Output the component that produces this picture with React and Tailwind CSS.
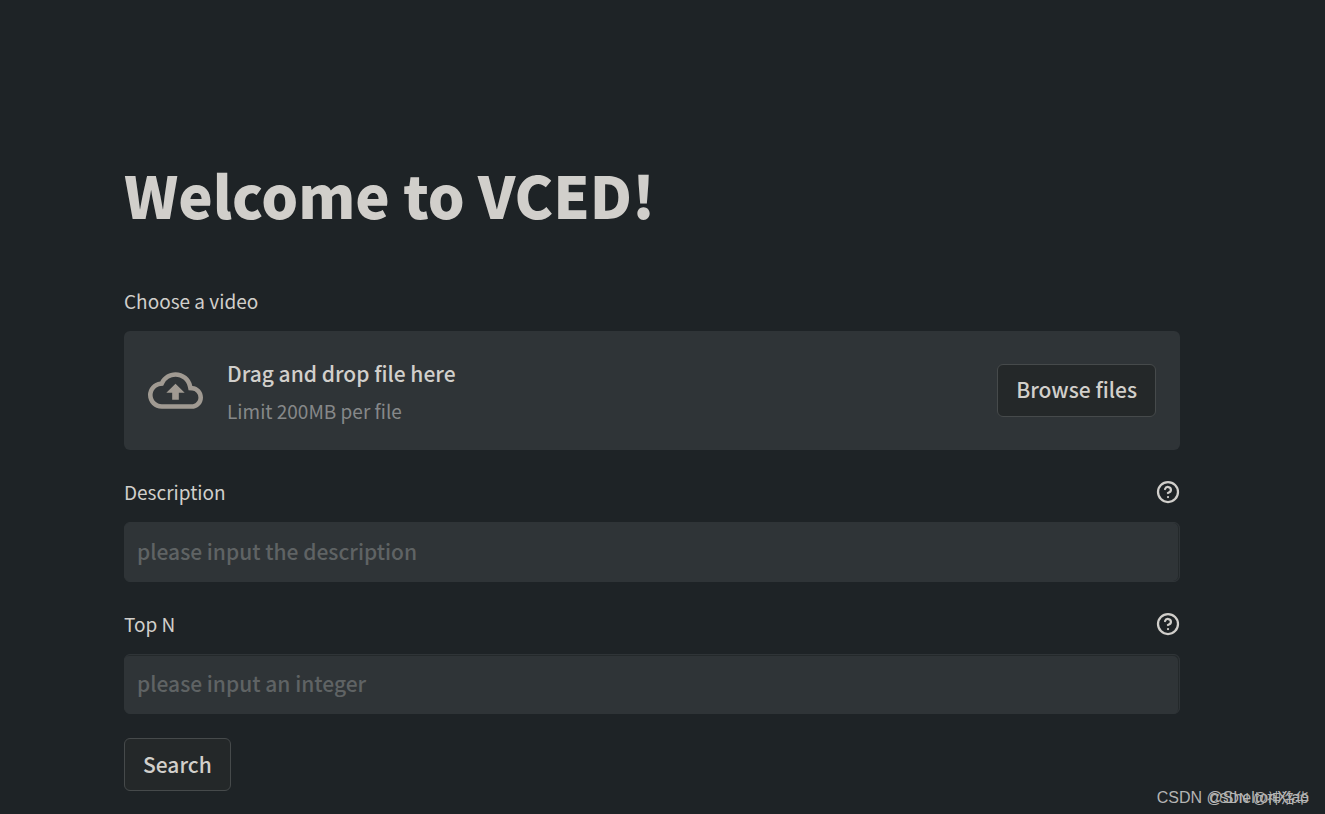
import React, { useRef, useState } from 'react';

const HelpIcon = () => (
  <svg
    xmlns="http://www.w3.org/2000/svg"
    className="h-6 w-6"
    viewBox="0 0 24 24"
    fill="none"
    stroke="currentColor"
    strokeWidth="2.25"
    strokeLinecap="round"
    strokeLinejoin="round"
  >
    <circle cx="12" cy="12" r="10" />
    <path d="M9.09 9a3 3 0 0 1 5.83 1c0 2-3 3-3 3" />
    <line x1="12" y1="17" x2="12.01" y2="17" />
  </svg>
);

const UploadIcon = () => (
  <svg
    xmlns="http://www.w3.org/2000/svg"
    className="h-[55px] w-[55px] shrink-0 text-[#a09a92]"
    viewBox="0 0 24 24"
    fill="currentColor"
  >
    <path d="M19.35 10.04A7.49 7.49 0 0 0 12 4C9.11 4 6.6 5.64 5.35 8.04A5.994 5.994 0 0 0 0 14c0 3.31 2.69 6 6 6h13c2.76 0 5-2.24 5-5 0-2.64-2.05-4.78-4.65-4.96zM19 18H6c-2.21 0-4-1.79-4-4 0-2.05 1.53-3.76 3.56-3.97l1.07-.11.5-.95A5.469 5.469 0 0 1 12 6c2.62 0 4.88 1.86 5.39 4.43l.3 1.5 1.53.11A2.98 2.98 0 0 1 22 15c0 1.65-1.35 3-3 3zM8 13h2.55v3h2.9v-3H16l-4-4z" />
  </svg>
);

const TextField = ({ id, label, placeholder, value, onChange, edge }) => (
  <div>
    <div className="flex h-9 items-center justify-between mb-3">
      <label htmlFor={id} className="text-[19px]">
        {label}
      </label>
      <button type="button" aria-label={`Help: ${label}`}>
        <HelpIcon />
      </button>
    </div>
    <input
      id={id}
      type="text"
      className={`block h-15 w-full rounded-md border border-[#2f3437] bg-[#2f3437] px-3 pb-0.5 text-[21px] font-medium placeholder:text-[#5f6364] focus:outline-none focus:border-red-400 ${edge}`}
      placeholder={placeholder}
      value={value}
      onChange={(e) => onChange(e.target.value)}
    />
  </div>
);

const App = () => {
  const fileInput = useRef(null);
  const [description, setDescription] = useState('');
  const [topN, setTopN] = useState('');

  return (
    <div className="relative min-h-screen bg-[#1e2326] pr-[21px] font-['Noto_Sans_CJK_SC',sans-serif] text-[#d1cfcb]">
      <main className="mx-auto max-w-[1104px] px-6 pt-[150px] pb-5">
        <h1 className="mb-[45px] text-[58px] leading-[88px] font-black">Welcome to VCED!</h1>

        <form className="flex flex-col gap-6" onSubmit={(e) => e.preventDefault()}>
          <div>
            <div className="flex h-9 items-center mb-3">
              <label htmlFor="video" className="text-[19px]">
                Choose a video
              </label>
            </div>
            <div className="flex items-center rounded-md bg-[#2f3437] px-6 h-[119px]">
              <UploadIcon />
              <div className="ml-6 flex-1">
                <p className="text-[21px] leading-10 font-medium">Drag and drop file here</p>
                <p className="text-[19px] leading-9 text-[#868889]">Limit 200MB per file</p>
              </div>
              <input id="video" ref={fileInput} type="file" className="hidden" />
              <button
                type="button"
                className="h-[53px] rounded-md border border-[#464a4b] bg-[#242829] px-[18px] pb-0.5 text-[21px] font-medium"
                onClick={() => fileInput.current.click()}
              >
                Browse files
              </button>
            </div>
          </div>

          <TextField
            id="description"
            label="Description"
            placeholder="please input the description"
            value={description}
            onChange={setDescription}
            edge="shadow-[inset_-1px_0_#24292b]"
          />
          <TextField
            id="top-n"
            label="Top N"
            placeholder="please input an integer"
            value={topN}
            onChange={setTopN}
            edge="shadow-[inset_-1px_1px_#24292b]"
          />

          <button
            type="submit"
            className="h-[53px] self-start rounded-md border border-[#464a4b] bg-[#242829] px-[18px] text-[21px] font-medium"
          >
            Search
          </button>
        </form>
      </main>

      {/* Watermarks, one printed over the other */}
      <div className="absolute right-4 bottom-1 grid justify-items-end items-center text-[#b4b4b3]">
        <span className="col-start-1 row-start-1 font-['Liberation_Sans',sans-serif] text-base">CSDN @SheltonXiao</span>
        <span className="col-start-1 row-start-1 font-['Liberation_Sans','Noto_Sans_CJK_SC',sans-serif] text-sm">CSDN @神洛华</span>
      </div>
    </div>
  );
};

export default App;
